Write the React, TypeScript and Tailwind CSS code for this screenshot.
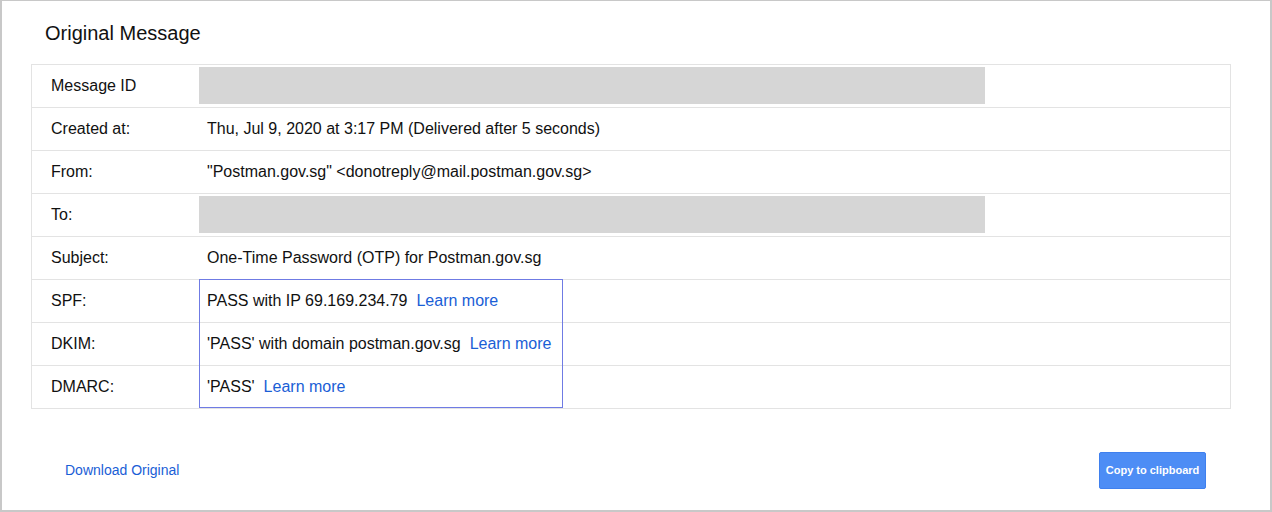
import React from 'react';

type Row = {
  label: string;
  value?: string;
  redacted?: boolean;
  link?: boolean;
};

const ROWS: Row[] = [
  { label: 'Message ID', redacted: true },
  { label: 'Created at:', value: 'Thu, Jul 9, 2020 at 3:17 PM (Delivered after 5 seconds)' },
  { label: 'From:', value: '"Postman.gov.sg" <donotreply@mail.postman.gov.sg>' },
  { label: 'To:', redacted: true },
  { label: 'Subject:', value: 'One-Time Password (OTP) for Postman.gov.sg' },
  { label: 'SPF:', value: 'PASS with IP 69.169.234.79', link: true },
  { label: 'DKIM:', value: "'PASS' with domain postman.gov.sg", link: true },
  { label: 'DMARC:', value: "'PASS'", link: true },
];

const App: React.FC = () => {
  return (
    <div
      className="w-[1272px] h-[512px] bg-white border-2 border-t border-[#c8c8c8] flex flex-col text-[#111]"
      style={{ fontFamily: '"Liberation Sans", Arial, sans-serif' }}
    >
      {/* Header */}
      <div className="h-[63px] flex items-center pl-[43px] text-[20px]">Original Message</div>

      {/* Details table */}
      <div className="relative ml-[29px] w-[1200px] border-t border-l border-r border-[#e3e3e3]">
        {ROWS.map((row) => (
          <div key={row.label} className="flex h-[43px] border-b border-[#e3e3e3] text-[16px]">
            <div className="w-[167px] shrink-0 flex items-center pl-[19px]">{row.label}</div>
            {row.redacted ? (
              <div className="flex items-start pt-[2px]">
                <div className="w-[786px] h-[37px] bg-[#d6d6d6]" />
              </div>
            ) : (
              <div className="flex items-center pl-[8px]">
                <span>{row.value}</span>
                {row.link && (
                  <a href="#" className="ml-[9px] text-[#1a5ed6]">
                    Learn more
                  </a>
                )}
              </div>
            )}
          </div>
        ))}

        {/* Highlight around authentication results */}
        <div className="absolute left-[167px] top-[214px] w-[364px] h-[129px] border border-[#6f7be4] pointer-events-none" />
      </div>

      {/* Footer */}
      <div className="flex-1 flex items-center justify-between pl-[63px] pr-[64px] pt-[21px]">
        <a href="#" className="text-[14px] text-[#1a5ed6]">
          Download Original
        </a>
        <button className="w-[107px] h-[37px] rounded-[2px] bg-[#4d8df5] border border-[#3f80ee] text-white text-[11px] font-bold">
          Copy to clipboard
        </button>
      </div>
    </div>
  );
};

export default App;
